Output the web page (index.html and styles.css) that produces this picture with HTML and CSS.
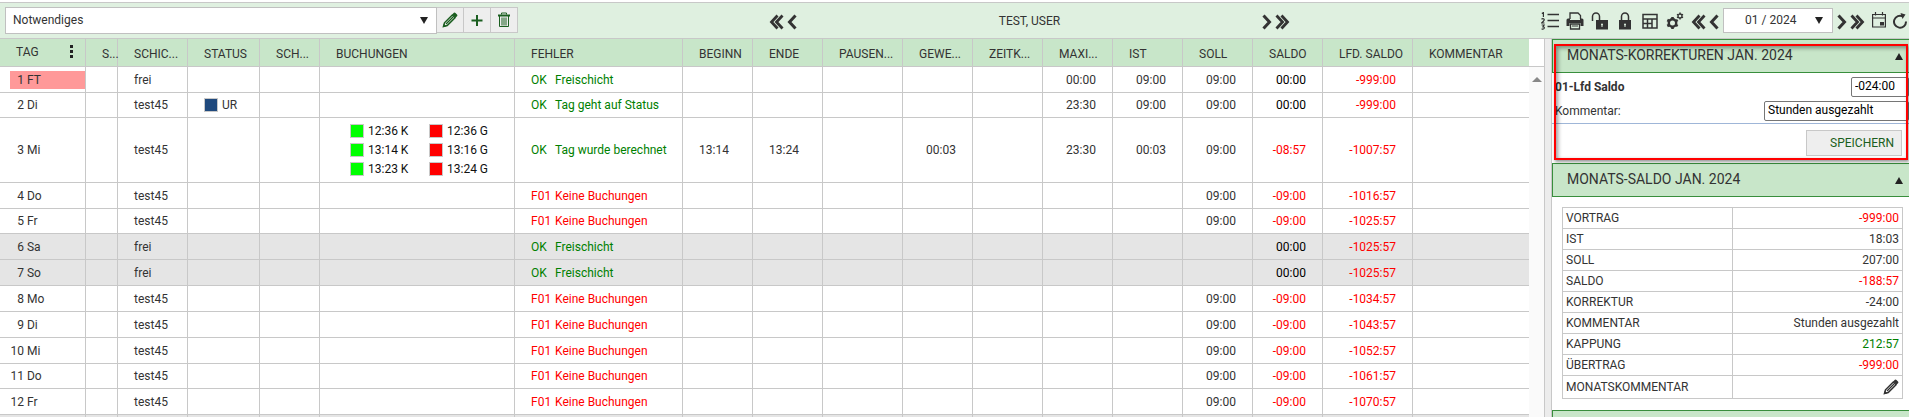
FILE: index.html
```html
<!DOCTYPE html>
<html lang="de">
<head>
<meta charset="utf-8">
<title>Monatsübersicht</title>
<link rel="stylesheet" href="styles.css">
</head>
<body>
<svg class="defs" aria-hidden="true">
  <symbol id="pencil" viewBox="0 0 16 16"><path d="M1.500 14.500l1-3.700L10.300 3l2.700 2.700-7.800 7.800z" fill="none" stroke="currentColor" stroke-width="1.500"/><path d="M4 12l7-7" stroke="currentColor" stroke-width="1.200"/><path d="M10.200 2.500l1.700-1.700q.8-.6 1.600.2l1.500 1.500q.8.8.2 1.600l-1.700 1.700z" fill="currentColor"/><path d="M.8 15.200l1-3.500 2.500 2.500z" fill="currentColor"/></symbol>
  <symbol id="prev" viewBox="0 0 10 16"><path d="M8.500 1.500L2.500 8l6 6.500" fill="none" stroke="currentColor" stroke-width="3"/></symbol>
  <symbol id="next" viewBox="0 0 10 16"><path d="M1.500 1.500l6 6.500-6 6.500" fill="none" stroke="currentColor" stroke-width="3"/></symbol>
  <symbol id="first" viewBox="0 0 15 16"><path d="M8.500 1.500L2.500 8l6 6.500M13.500 1.500L7.500 8l6 6.500" fill="none" stroke="currentColor" stroke-width="2.800"/></symbol>
  <symbol id="last" viewBox="0 0 15 16"><path d="M1.500 1.500l6 6.500-6 6.500M6.500 1.500l6 6.500-6 6.500" fill="none" stroke="currentColor" stroke-width="2.800"/></symbol>
</svg>

<header class="toolbar">
  <div class="view">
    <div class="drop drop-view">
      <select aria-label="Ansicht"><option>Notwendiges</option></select>
      <svg class="caret" viewBox="0 0 8 7"><path d="M0 0h8L4 7z"/></svg>
    </div>
    <button class="tool" aria-label="Bearbeiten"><svg class="i16"><use href="#pencil"/></svg></button>
    <button class="tool" aria-label="Hinzufügen"><svg class="i16" viewBox="0 0 16 16"><path d="M8 3v11M2.500 8.500h11" stroke="currentColor" stroke-width="2"/></svg></button>
    <button class="tool" aria-label="Löschen"><svg class="i16" viewBox="0 0 16 16" fill="none" stroke="currentColor"><path d="M5.500 2.500V1h5v1.500"/><path d="M2 3.500h12" stroke-width="2"/><path d="M3.500 4v10.500h9V4M6 5.500v8M8 5.500v8M10 5.500v8"/></svg></button>
  </div>
  <div class="person">
    <div class="pair">
      <button class="icon" aria-label="Erster"><svg class="w15"><use href="#first"/></svg></button>
      <button class="icon" aria-label="Vorheriger"><svg class="w10"><use href="#prev"/></svg></button>
    </div>
    <span class="name">TEST, USER</span>
    <div class="pair">
      <button class="icon" aria-label="Nächster"><svg class="w10"><use href="#next"/></svg></button>
      <button class="icon" aria-label="Letzter"><svg class="w15"><use href="#last"/></svg></button>
    </div>
  </div>
  <div class="actions">
    <button class="icon" aria-label="Liste"><svg class="w18" viewBox="0 0 18 18"><path d="M6.500 2.500H18M6.500 8.500H18M6.500 14.500H18" stroke="currentColor" stroke-width="1.500"/><path d="M.8 1.500L2.400.6V5M.5 7.200q1.200-1 2.400-.2.800 1-.3 2L.6 11h2.900M.6 13h2.500L2 14.800q1.500.1 1.300 1.300-.5 1.500-2.700.8" fill="none" stroke="currentColor" stroke-width="1.200"/></svg></button>
    <button class="icon" aria-label="Drucken"><svg class="w18" viewBox="0 0 18 18"><path d="M4 7V1h8l2.500 2.500V7M4.500 12h9v5h-9z" fill="none" stroke="currentColor" stroke-width="1.300"/><path d="M2 6.500h2V8h10V6.500h2q1.500 0 1.500 1.500v6h-3v-3h-11v3h-3V8Q.5 6.500 2 6.500z" fill="currentColor"/><path d="M6 14h6" stroke="currentColor"/></svg></button>
    <button class="icon" aria-label="Entsperren"><svg class="w18" viewBox="0 0 18 18"><path d="M1.500 9V4.500a3.500 3.500 0 0 1 7 0V8" fill="none" stroke="currentColor" stroke-width="1.500"/><path fill-rule="evenodd" d="M5 8h12v9.500H5zM10 12.500q0 .7.500 1V15h1v-1.500q.5-.3.500-1a1 1 0 0 0-2 0z" fill="currentColor"/></svg></button>
    <button class="icon" aria-label="Sperren"><svg class="w18" viewBox="0 0 18 18"><path d="M5.500 9V4.500a3.500 3.500 0 0 1 7 0V9" fill="none" stroke="currentColor" stroke-width="1.500"/><path fill-rule="evenodd" d="M3 8h12v9.500H3zM8 12.500q0 .7.500 1V15h1v-1.500q.5-.3.500-1a1 1 0 0 0-2 0z" fill="currentColor"/></svg></button>
    <button class="icon" aria-label="Tabelle"><svg class="w18" viewBox="0 0 18 18"><path d="M2 2.500h14v13.500H2zM2 7h14M2 11.500h9M6.500 7v9M11 7v9" fill="none" stroke="currentColor" stroke-width="1.500"/></svg></button>
    <button class="icon" aria-label="Einstellungen"><svg class="w18" viewBox="0 0 18 18" fill="none" stroke="currentColor"><circle cx="6.500" cy="11" r="3.700" stroke-width="2.400"/><path d="M6.500 5v2M6.500 15v2M1.300 8l1.800 1M10 13l1.700 1M1.300 14l1.800-1M10 9l1.700-1" stroke-width="2.600"/><circle cx="14" cy="4" r="2" stroke-width="1.300"/><path d="M14 .5v1.300M14 6.200v1.300M11 2.300l1 .6M16 5.100l1 .6M11 5.700l1-.6M16 2.900l1-.6" stroke-width="1.500"/></svg></button>
    <div class="month">
      <div class="pair">
        <button class="icon" aria-label="Jahr zurück"><svg class="w15"><use href="#first"/></svg></button>
        <button class="icon" aria-label="Monat zurück"><svg class="w10"><use href="#prev"/></svg></button>
      </div>
      <div class="drop drop-month">
        <select aria-label="Monat"><option>01 / 2024</option></select>
        <svg class="caret" viewBox="0 0 8 7"><path d="M0 0h8L4 7z"/></svg>
      </div>
      <div class="pair">
        <button class="icon" aria-label="Monat vor"><svg class="w10"><use href="#next"/></svg></button>
        <button class="icon" aria-label="Jahr vor"><svg class="w15"><use href="#last"/></svg></button>
      </div>
    </div>
    <button class="icon" aria-label="Kalender"><svg class="w14 raise" viewBox="1 0 14 16"><path d="M1.600 2.500h12.800v12.500H1.600zM1.600 6h12.800M4.500 0v3.500M11.500 0v3.500" fill="none" stroke="currentColor" stroke-width="1.200"/><path d="M9 10h4v3.500H9z" fill="currentColor"/></svg></button>
    <button class="icon" aria-label="Aktualisieren"><svg class="w14" viewBox="0 0 14 16"><path d="M10 3.500A6 6 0 1 0 13 8.500" fill="none" stroke="currentColor" stroke-width="2"/><path d="M7.500 0l5 1.500L9.500 6z" fill="currentColor"/></svg></button>
  </div>
</header>

<main class="content">
  <div class="days">
    <table class="grid">
      <colgroup><col class="c86"><col class="c32"><col class="c70"><col class="c72"><col class="c60"><col class="c195"><col class="c168"><col class="c70"><col class="c70"><col class="c80"><col class="c70"><col class="c70"><col class="c70"><col class="c70"><col class="c70"><col class="c70"><col class="c90"><col></colgroup>
      <thead>
        <tr><th class="tag"><div class="tag-head">TAG<svg class="dots" viewBox="0 0 4 14"><path d="M0 0h3v3H0zM0 5h3v3H0zM0 10h3v3H0z"/></svg></div></th><th>S...</th><th>SCHIC...</th><th>STATUS</th><th>SCH...</th><th>BUCHUNGEN</th><th>FEHLER</th><th>BEGINN</th><th>ENDE</th><th>PAUSEN...</th><th>GEWE...</th><th>ZEITK...</th><th>MAXI...</th><th>IST</th><th>SOLL</th><th>SALDO</th><th>LFD. SALDO</th><th>KOMMENTAR</th></tr>
      </thead>
      <tbody>
        <tr><td class="day"><div class="holiday"><span class="no">1</span> FT</div></td><td></td><td>frei</td><td></td><td></td><td></td><td class="ok"><span class="code">OK</span>Freischicht</td><td></td><td></td><td></td><td></td><td></td><td class="num">00:00</td><td class="num">09:00</td><td class="num">09:00</td><td class="num zero">00:00</td><td class="num bad">-999:00</td><td></td></tr>
        <tr class="short"><td class="day"><span class="no">2</span> Di</td><td></td><td>test45</td><td><span class="mark"><i class="box blue"></i>UR</span></td><td></td><td></td><td class="ok"><span class="code">OK</span>Tag geht auf Status</td><td></td><td></td><td></td><td></td><td></td><td class="num">23:30</td><td class="num">09:00</td><td class="num">09:00</td><td class="num zero">00:00</td><td class="num bad">-999:00</td><td></td></tr>
        <tr class="tall"><td class="day"><span class="no">3</span> Mi</td><td></td><td>test45</td><td></td><td></td><td class="stamps-cell"><div class="stamps"><span class="mark"><i class="box in"></i>12:36 K</span><span class="mark"><i class="box out"></i>12:36 G</span><span class="mark"><i class="box in"></i>13:14 K</span><span class="mark"><i class="box out"></i>13:16 G</span><span class="mark"><i class="box in"></i>13:23 K</span><span class="mark"><i class="box out"></i>13:24 G</span></div></td><td class="ok"><span class="code">OK</span>Tag wurde berechnet</td><td>13:14</td><td>13:24</td><td></td><td class="num">00:03</td><td></td><td class="num">23:30</td><td class="num">00:03</td><td class="num">09:00</td><td class="num bad">-08:57</td><td class="num bad">-1007:57</td><td></td></tr>
        <tr><td class="day"><span class="no">4</span> Do</td><td></td><td>test45</td><td></td><td></td><td></td><td class="bad"><span class="code">F01</span>Keine Buchungen</td><td></td><td></td><td></td><td></td><td></td><td></td><td></td><td class="num">09:00</td><td class="num bad">-09:00</td><td class="num bad">-1016:57</td><td></td></tr>
        <tr class="short"><td class="day"><span class="no">5</span> Fr</td><td></td><td>test45</td><td></td><td></td><td></td><td class="bad"><span class="code">F01</span>Keine Buchungen</td><td></td><td></td><td></td><td></td><td></td><td></td><td></td><td class="num">09:00</td><td class="num bad">-09:00</td><td class="num bad">-1025:57</td><td></td></tr>
        <tr class="weekend"><td class="day"><span class="no">6</span> Sa</td><td></td><td>frei</td><td></td><td></td><td></td><td class="ok"><span class="code">OK</span>Freischicht</td><td></td><td></td><td></td><td></td><td></td><td></td><td></td><td></td><td class="num zero">00:00</td><td class="num bad">-1025:57</td><td></td></tr>
        <tr class="weekend"><td class="day"><span class="no">7</span> So</td><td></td><td>frei</td><td></td><td></td><td></td><td class="ok"><span class="code">OK</span>Freischicht</td><td></td><td></td><td></td><td></td><td></td><td></td><td></td><td></td><td class="num zero">00:00</td><td class="num bad">-1025:57</td><td></td></tr>
        <tr><td class="day"><span class="no">8</span> Mo</td><td></td><td>test45</td><td></td><td></td><td></td><td class="bad"><span class="code">F01</span>Keine Buchungen</td><td></td><td></td><td></td><td></td><td></td><td></td><td></td><td class="num">09:00</td><td class="num bad">-09:00</td><td class="num bad">-1034:57</td><td></td></tr>
        <tr><td class="day"><span class="no">9</span> Di</td><td></td><td>test45</td><td></td><td></td><td></td><td class="bad"><span class="code">F01</span>Keine Buchungen</td><td></td><td></td><td></td><td></td><td></td><td></td><td></td><td class="num">09:00</td><td class="num bad">-09:00</td><td class="num bad">-1043:57</td><td></td></tr>
        <tr><td class="day"><span class="no">10</span> Mi</td><td></td><td>test45</td><td></td><td></td><td></td><td class="bad"><span class="code">F01</span>Keine Buchungen</td><td></td><td></td><td></td><td></td><td></td><td></td><td></td><td class="num">09:00</td><td class="num bad">-09:00</td><td class="num bad">-1052:57</td><td></td></tr>
        <tr class="short"><td class="day"><span class="no">11</span> Do</td><td></td><td>test45</td><td></td><td></td><td></td><td class="bad"><span class="code">F01</span>Keine Buchungen</td><td></td><td></td><td></td><td></td><td></td><td></td><td></td><td class="num">09:00</td><td class="num bad">-09:00</td><td class="num bad">-1061:57</td><td></td></tr>
        <tr><td class="day"><span class="no">12</span> Fr</td><td></td><td>test45</td><td></td><td></td><td></td><td class="bad"><span class="code">F01</span>Keine Buchungen</td><td></td><td></td><td></td><td></td><td></td><td></td><td></td><td class="num">09:00</td><td class="num bad">-09:00</td><td class="num bad">-1070:57</td><td></td></tr>
        <tr class="weekend"><td></td><td></td><td></td><td></td><td></td><td></td><td></td><td></td><td></td><td></td><td></td><td></td><td></td><td></td><td></td><td></td><td></td><td></td></tr>
      </tbody>
    </table>
  </div>
  <div class="scroll"><div class="scroll-head"></div><svg class="up" viewBox="0 0 10 5"><path d="M5 0l5 5H0z"/></svg></div>
  <div class="splitter"></div>
  <aside class="side">
    <section class="corrections">
      <h2 class="bar">MONATS-KORREKTUREN JAN. 2024<svg class="fold" viewBox="0 0 8 7"><path d="M4 0l4 7H0z"/></svg></h2>
      <form class="form">
        <div class="field"><label class="strong" for="saldo">01-Lfd Saldo</label><input class="short-input" id="saldo" value="-024:00"></div>
        <div class="field"><label for="note">Kommentar:</label><input class="long-input" id="note" value="Stunden ausgezahlt"></div>
        <div class="submit"><button type="button" class="save">SPEICHERN</button></div>
      </form>
      <div class="highlight"></div>
    </section>
    <section>
      <h2 class="bar">MONATS-SALDO JAN. 2024<svg class="fold" viewBox="0 0 8 7"><path d="M4 0l4 7H0z"/></svg></h2>
      <div class="sums-wrap">
        <table class="sums">
          <tbody>
            <tr><th>VORTRAG</th><td class="bad">-999:00</td></tr>
            <tr><th>IST</th><td>18:03</td></tr>
            <tr><th>SOLL</th><td>207:00</td></tr>
            <tr><th>SALDO</th><td class="bad">-188:57</td></tr>
            <tr><th>KORREKTUR</th><td>-24:00</td></tr>
            <tr><th>KOMMENTAR</th><td>Stunden ausgezahlt</td></tr>
            <tr><th>KAPPUNG</th><td class="ok">212:57</td></tr>
            <tr><th>ÜBERTRAG</th><td class="bad">-999:00</td></tr>
            <tr class="last"><th>MONATSKOMMENTAR</th><td><button class="icon edit" aria-label="Monatskommentar bearbeiten"><svg class="i16"><use href="#pencil"/></svg></button></td></tr>
          </tbody>
        </table>
      </div>
    </section>
    <section><h2 class="bar"></h2></section>
  </aside>
</main>
</body>
</html>
```

FILE: styles.css
```css
* { box-sizing: border-box; }
body {
  margin: 0;
  padding-top: 2px;
  height: 100vh;
  overflow: hidden;
  display: flex;
  flex-direction: column;
  background: #fff;
  color: #333;
  font: 12px/16px Roboto, sans-serif;
}
button, input, select { font: inherit; color: inherit; margin: 0; }
svg { display: block; }
.defs { position: absolute; width: 0; height: 0; }

.toolbar {
  flex: none;
  display: flex;
  align-items: center;
  height: 37px;
  padding: 0 2px 0 5px;
  border-top: 1px solid #c8c8c8;
  border-bottom: 1px solid #c8c8c8;
  background: #dff0e0;
}
.view, .actions, .pair, .month { display: flex; align-items: center; }
.view { padding-bottom: 1px; }
.drop { position: relative; }
.drop select {
  display: block;
  width: 100%;
  height: 100%;
  appearance: none;
  border: 1px solid #c0c0c0;
  border-radius: 0;
  background: #fff;
}
.drop-view { width: 432px; height: 27px; }
.drop-view select { padding: 0 24px 1px 7px; }
.drop-month { width: 110px; height: 25px; }
.drop-month select { padding: 0 24px 1px 21px; }
.caret { position: absolute; right: 9px; top: 10px; width: 8px; height: 7px; fill: #222; }
.drop-month .caret { right: 10px; top: 9px; }
.tool {
  display: grid;
  place-items: center;
  width: 27px;
  height: 26px;
  padding: 0;
  border: 1px solid #c8c8c8;
  border-left: 0;
  background: #eee;
  color: #1b5e20;
}
.icon { border: 0; padding: 0; background: none; }
.i16 { width: 16px; height: 16px; }
.w10 { width: 10px; height: 16px; }
.w14 { width: 14px; height: 16px; }
.w15 { width: 15px; height: 16px; }
.w18 { width: 18px; height: 18px; }
.person { flex: 1; display: flex; align-items: center; justify-content: center; gap: 202px; }
.pair { gap: 3px; padding-top: 2px; }
.name { white-space: nowrap; }
.actions { gap: 7px; }
.month { gap: 4px; }
.raise { margin-bottom: 2px; }

.content { flex: 1; min-height: 0; display: flex; }
.days { flex: 1; min-width: 0; overflow: hidden; }
table { border-spacing: 0; border-collapse: separate; }
th { font-weight: 400; text-align: left; }
.grid { width: 100%; table-layout: fixed; white-space: nowrap; }
.c32 { width: 32px; }
.c60 { width: 60px; }
.c70 { width: 70px; }
.c72 { width: 72px; }
.c80 { width: 80px; }
.c86 { width: 86px; }
.c90 { width: 90px; }
.c168 { width: 168px; }
.c195 { width: 195px; }
.grid th, .grid td {
  height: 26px;
  padding: 0 0 0 16px;
  border-right: 1px solid #c8c8c8;
  border-bottom: 1px solid #c8c8c8;
}
.grid th { height: 28px; padding-top: 2px; background: #c8e6c9; }
.grid th:last-child, .grid td:last-child { border-right: 0; }
.grid .short td { height: 25px; }
.grid .tall td { height: 65px; }
.grid .weekend td { background: #e5e5e5; }
.tag-head { display: flex; justify-content: space-between; align-items: center; padding: 0 11px 4px 0; }
.dots { width: 4px; height: 14px; fill: #222; }
.grid .day { padding-left: 10px; }
.holiday { background: #ff9999; line-height: 18px; }
.no { display: inline-block; width: 14px; text-align: right; }
.code { display: inline-block; width: 24px; }
.grid .num { text-align: right; padding-right: 16px; }
.zero { color: #000; }
.bad { color: #f00; }
.ok { color: #008000; }
.mark { display: flex; align-items: center; gap: 4px; }
.box { width: 14px; height: 14px; border: 1px solid #c8c8c8; }
.blue { background: #1f497d; }
.in { background: #0f0; }
.out { background: #f00; }
.grid .stamps-cell { padding-left: 30px; color: #111; }
.stamps { display: grid; grid-template-columns: 79px 1fr; row-gap: 3px; }

.scroll { width: 15px; background: #fafafa; }
.scroll-head { height: 28px; background: #fff; border-bottom: 1px solid #c8c8c8; }
.up { width: 10px; height: 5px; margin: 10px 3px; fill: #888; }
.splitter { width: 8px; background: #ececec; border: 1px solid #c8c8c8; border-width: 0 1px; }

.side { width: 357px; overflow: hidden; }
.corrections { position: relative; }
.bar {
  display: flex;
  align-items: center;
  justify-content: space-between;
  height: 34px;
  margin: 0;
  padding: 0 6px 2px 14px;
  border: 1px solid #388e3c;
  border-right: 0;
  background: #c8e6c9;
  font-size: 14px;
  font-weight: 400;
}
.fold { width: 8px; height: 7px; margin-top: 3px; fill: #222; }
.form { margin: 0; }
.field { display: flex; align-items: center; justify-content: space-between; height: 24px; padding-left: 3px; }
.field:first-child { height: 26px; padding-top: 2px; }
.strong { font-weight: 700; }
.field input { height: 20px; padding: 0 3px 2px; border: 1px solid #767676; border-radius: 2px; color: #000; }
.short-input { width: 58px; }
.long-input { width: 145px; }
.submit { display: flex; justify-content: flex-end; padding: 6px 7px 7px 0; border-top: 1px solid #9fb6d8; }
.save {
  width: 96px;
  height: 26px;
  padding: 0 7px 0 0;
  border: 1px solid #c8c8c8;
  background: #eee;
  color: #1b5e20;
  text-align: right;
}
.highlight {
  position: absolute;
  inset: 5px 1px 3px 2px;
  border: 2px solid #f00;
  box-shadow: 1px 2px 3px rgba(0, 0, 0, .4), inset 2px 2px 4px rgba(0, 0, 0, .4);
  pointer-events: none;
}
.sums-wrap { padding: 10px 6px 11px 10px; }
.sums { width: 100%; table-layout: fixed; border: 1px solid #c8c8c8; border-width: 1px 0 0 1px; }
.sums th, .sums td { height: 21px; padding: 0 3px; border: 1px solid #c8c8c8; border-width: 0 1px 1px 0; }
.sums td { text-align: right; }
.sums .last th, .sums .last td { height: 23px; }
.edit { display: block; margin-left: auto; }
```
